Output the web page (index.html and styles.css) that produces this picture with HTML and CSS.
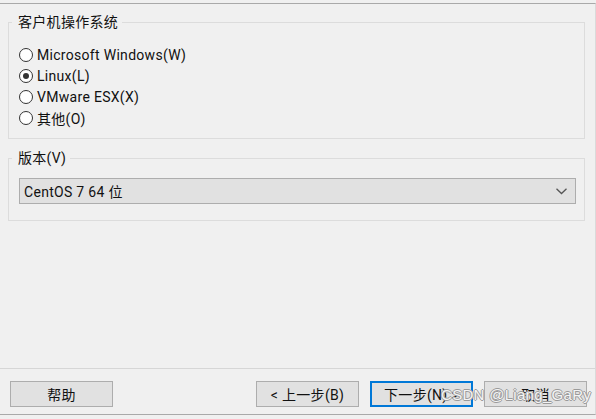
FILE: index.html
```html
<!DOCTYPE html>
<html>
<head>
<meta charset="utf-8">
<link rel="stylesheet" href="styles.css">
</head>
<body>
<div class="frame">
  <div class="content">
    <div class="group os">
      <span class="legend">客户机操作系统</span>
      <label class="radio"><span class="dot"></span><span>Microsoft Windows(W)</span></label>
      <label class="radio"><span class="dot on"></span><span>Linux(L)</span></label>
      <label class="radio"><span class="dot"></span><span>VMware ESX(X)</span></label>
      <label class="radio"><span class="dot"></span><span>其他(O)</span></label>
    </div>
    <div class="group ver">
      <span class="legend">版本(V)</span>
      <div class="select">
        <span>CentOS 7 64 位</span>
        <svg class="chev" width="11" height="7" viewBox="0 0 11 7"><polyline points="0.5,0.8 5.5,5.5 10.5,0.8" fill="none" stroke="#555" stroke-width="1.3"/></svg>
      </div>
    </div>
  </div>
  <div class="footer">
    <button class="btn">帮助</button>
    <div class="right">
      <button class="btn">&lt; 上一步(B)</button>
      <button class="btn primary">下一步(N) &gt;</button>
      <button class="btn">取消</button>
    </div>
    <span class="watermark">CSDN @Liang_GaRy</span>
  </div>
</div>
</body>
</html>
```
FILE: styles.css
```css
* { box-sizing: border-box; }
html, body { margin: 0; padding: 0; background: #f0f0f0; }
body {
  width: 596px; height: 419px; overflow: hidden;
  font-family: Roboto, "Noto Sans CJK SC", sans-serif;
  font-size: 14px; color: #111;
  letter-spacing: 0.3px;
}
.frame {
  margin-top: 3px;
  width: 596px;
  height: 412px;
  border-top: 1px solid #a9a9a9;
  border-right: 1px solid #dadada;
  border-bottom: 1px solid #a9a9a9;
  display: flex;
  flex-direction: column;
  position: relative;
}
.content {
  flex: 1;
  padding: 18px 10px 0 8px;
  display: flex;
  flex-direction: column;
}
.group {
  border: 1px solid #dcdcdc;
  position: relative;
}
.legend {
  position: absolute;
  top: -9px;
  left: 3px;
  padding: 0 4px 0 6px;
  line-height: 16px;
  background: #f0f0f0;
}
.os {
  height: 117px;
  padding: 21px 0 0 10px;
}
.radio {
  display: flex;
  align-items: center;
  height: 21px;
  gap: 4px;
}
.dot {
  width: 14px; height: 14px;
  border: 1px solid #333;
  border-radius: 50%;
  background: #fff;
  display: flex;
  align-items: center;
  justify-content: center;
}
.dot.on::after {
  content: "";
  width: 6px; height: 6px;
  border-radius: 50%;
  background: #333;
}
.ver {
  margin-top: 19px;
  height: 63px;
  padding: 19px 8px 0 10px;
}
.select {
  height: 26px;
  background: #e1e1e1;
  border: 1px solid #adadad;
  display: flex;
  align-items: center;
  justify-content: space-between;
  padding: 0 8px 0 4px;
}
.chev { margin-top: 1px; }
.footer {
  border-top: 1px solid #d6d6d6;
  height: 46px;
  padding: 12px 8px 0 10px;
  display: flex;
  justify-content: space-between;
  align-items: flex-start;
  position: relative;
}
.right { display: flex; gap: 11px; }
.btn {
  width: 103px; height: 26px;
  background: #e1e1e1;
  border: 1px solid #adadad;
  font-family: inherit;
  font-size: 14px;
  letter-spacing: 0.3px;
  color: #111;
  padding: 0;
}
.btn.primary { border: 2px solid #0078d7; }
.watermark {
  position: absolute;
  left: 441px;
  top: 17px;
  font-family: "Liberation Sans", "DejaVu Sans", sans-serif;
  font-size: 15px;
  color: #f4f4f4;
  text-shadow: 1px 0 0 #9a9a9a, -1px 0 0 #9a9a9a, 0 1px 0 #9a9a9a, 0 -1px 0 #9a9a9a;
  letter-spacing: 0.3px;
}
```
